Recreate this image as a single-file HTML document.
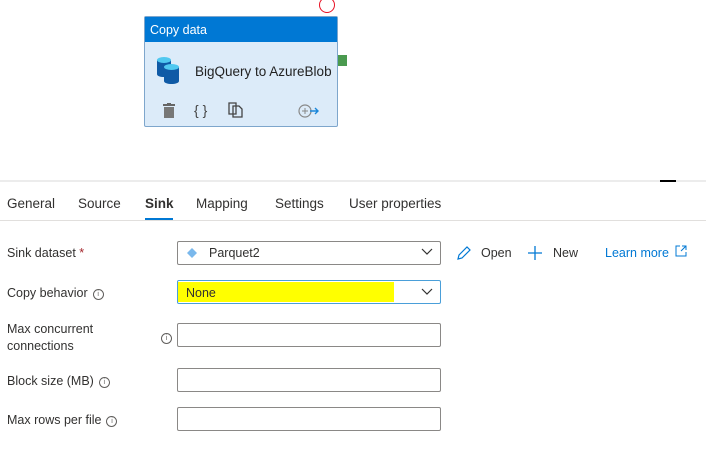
<!DOCTYPE html><html><head><style>
body{margin:0;width:706px;height:464px;background:#fff;font-family:"Liberation Sans",sans-serif;position:relative;overflow:hidden;color:#323130}
.a{position:absolute}
.lbl{font-size:12.5px;color:#323130}
.inp{position:absolute;left:177px;width:262px;height:22px;border:1px solid #8a8886;border-radius:2px;background:#fff}
.info{display:inline-block;width:9px;height:9px;border:1px solid #605e5c;border-radius:50%;font-size:7px;line-height:9px;text-align:center;vertical-align:1px;margin-left:5px;color:#605e5c}
</style></head><body>
<div class="a" style="left:319px;top:-3px;width:14px;height:14px;border:1.5px solid #e81123;border-radius:50%"></div>
<div class="a" style="left:338px;top:55px;width:9px;height:11px;background:#4a9a4f"></div>
<div class="a" style="left:144px;top:16px;width:192px;height:109px;border:1px solid #7ea6cc;border-radius:2px;background:#dcebf9"></div>
<div class="a" style="left:145px;top:17px;width:192px;height:25px;background:#0078d4;color:#fff;font-size:12.5px;line-height:26px;padding-left:5px;box-sizing:border-box">Copy data</div>
<svg class="a" style="left:156px;top:56px" width="30" height="30" viewBox="0 0 30 30">
<path d="M1 4v14c0 2 3 3 7 3s7-1 7-3V4z" fill="#0f5aa6"/><ellipse cx="8" cy="4" rx="7" ry="3" fill="#50c8f0"/>
<path d="M8 11v14c0 2 4 3 7.5 3s7.5-1 7.5-3V11z" fill="#0f5aa6"/><ellipse cx="15.5" cy="11" rx="7.5" ry="3" fill="#50c8f0"/></svg>
<div class="a" style="left:195px;top:64px;font-size:13.5px;color:#222">BigQuery to AzureBlob</div>
<svg class="a" style="left:162px;top:103px" width="14" height="16"><rect x="1" y="1" width="12" height="2" fill="#666"/><rect x="5" y="0" width="4" height="2" fill="#666"/><rect x="2" y="4" width="10" height="11" fill="#777"/></svg>
<div class="a" style="left:194px;top:102px;font-size:14px;color:#444">{ }</div>
<svg class="a" style="left:228px;top:102px" width="16" height="16"><path d="M1 1h7v11H1z M5 4h6l3 3v8H5z" fill="none" stroke="#444" stroke-width="1.3"/></svg>
<svg class="a" style="left:298px;top:104px" width="22" height="14"><circle cx="7" cy="7" r="6" fill="none" stroke="#888" stroke-width="1.2"/><path d="M4 7h6M7 4v6" stroke="#888"/><path d="M12 7h8M17 4l3 3-3 3" fill="none" stroke="#1a86d9" stroke-width="1.4"/></svg>
<div class="a" style="left:0;top:180px;width:706px;height:2px;background:#ececec"></div>
<div class="a" style="left:660px;top:180px;width:16px;height:2px;background:#000"></div>
<div class="a" style="left:0;top:220px;width:706px;height:1px;background:#e1dfdd"></div>
<div class="a" style="top:196px;left:7px;font-size:13.5px;color:#323130">
<span class="a" style="left:0">General</span><span class="a" style="left:71px">Source</span><span class="a" style="left:138px;font-weight:bold">Sink</span><span class="a" style="left:189px">Mapping</span><span class="a" style="left:268px">Settings</span><span class="a" style="left:342px;white-space:nowrap">User properties</span></div>
<div class="a" style="left:145px;top:218px;width:28px;height:2px;background:#0078d4"></div>
<div class="a lbl" style="left:7px;top:246px">Sink dataset <span style="color:#a4262c">*</span></div>
<div class="inp" style="top:241px"></div>
<svg class="a" style="left:187px;top:248px" width="10" height="10"><path d="M5 0l5 5-5 5-5-5z" fill="#7ab8ec"/></svg>
<div class="a lbl" style="left:209px;top:246px;color:#323130">Parquet2</div>
<svg class="a" style="left:421px;top:248px" width="12" height="8"><path d="M1 1l5 5 5-5" fill="none" stroke="#323130" stroke-width="1.2"/></svg>
<svg class="a" style="left:456px;top:245px" width="16" height="16"><path d="M2 14l1-4 8-8 3 3-8 8z" fill="none" stroke="#0078d4" stroke-width="1.2"/></svg>
<div class="a lbl" style="left:481px;top:246px">Open</div>
<svg class="a" style="left:527px;top:245px" width="16" height="16"><path d="M8 1v14M1 8h14" stroke="#0078d4" stroke-width="1.3"/></svg>
<div class="a lbl" style="left:553px;top:246px">New</div>
<div class="a lbl" style="left:605px;top:246px;color:#0078d4">Learn more</div>
<svg class="a" style="left:675px;top:245px" width="12" height="12"><path d="M5 1H1v10h10V7M7 1h4v4M11 1L6 6" fill="none" stroke="#0078d4"/></svg>
<div class="a lbl" style="left:7px;top:286px">Copy behavior<span class="info">i</span></div>
<div class="inp" style="top:280px;border-color:#4a9fd9"></div>
<div class="a" style="left:178px;top:282px;width:216px;height:20px;background:#ffff00"></div>
<div class="a lbl" style="left:186px;top:286px">None</div>
<svg class="a" style="left:421px;top:288px" width="12" height="8"><path d="M1 1l5 5 5-5" fill="none" stroke="#323130" stroke-width="1.2"/></svg>
<div class="a lbl" style="left:7px;top:321px;line-height:17px">Max concurrent<br>connections</div>
<div class="a" style="left:156px;top:328px"><span class="info">i</span></div>
<div class="inp" style="top:323px"></div>
<div class="a lbl" style="left:7px;top:374px">Block size (MB)<span class="info">i</span></div>
<div class="inp" style="top:368px"></div>
<div class="a lbl" style="left:7px;top:413px">Max rows per file<span class="info">i</span></div>
<div class="inp" style="top:407px"></div>
</body></html>
